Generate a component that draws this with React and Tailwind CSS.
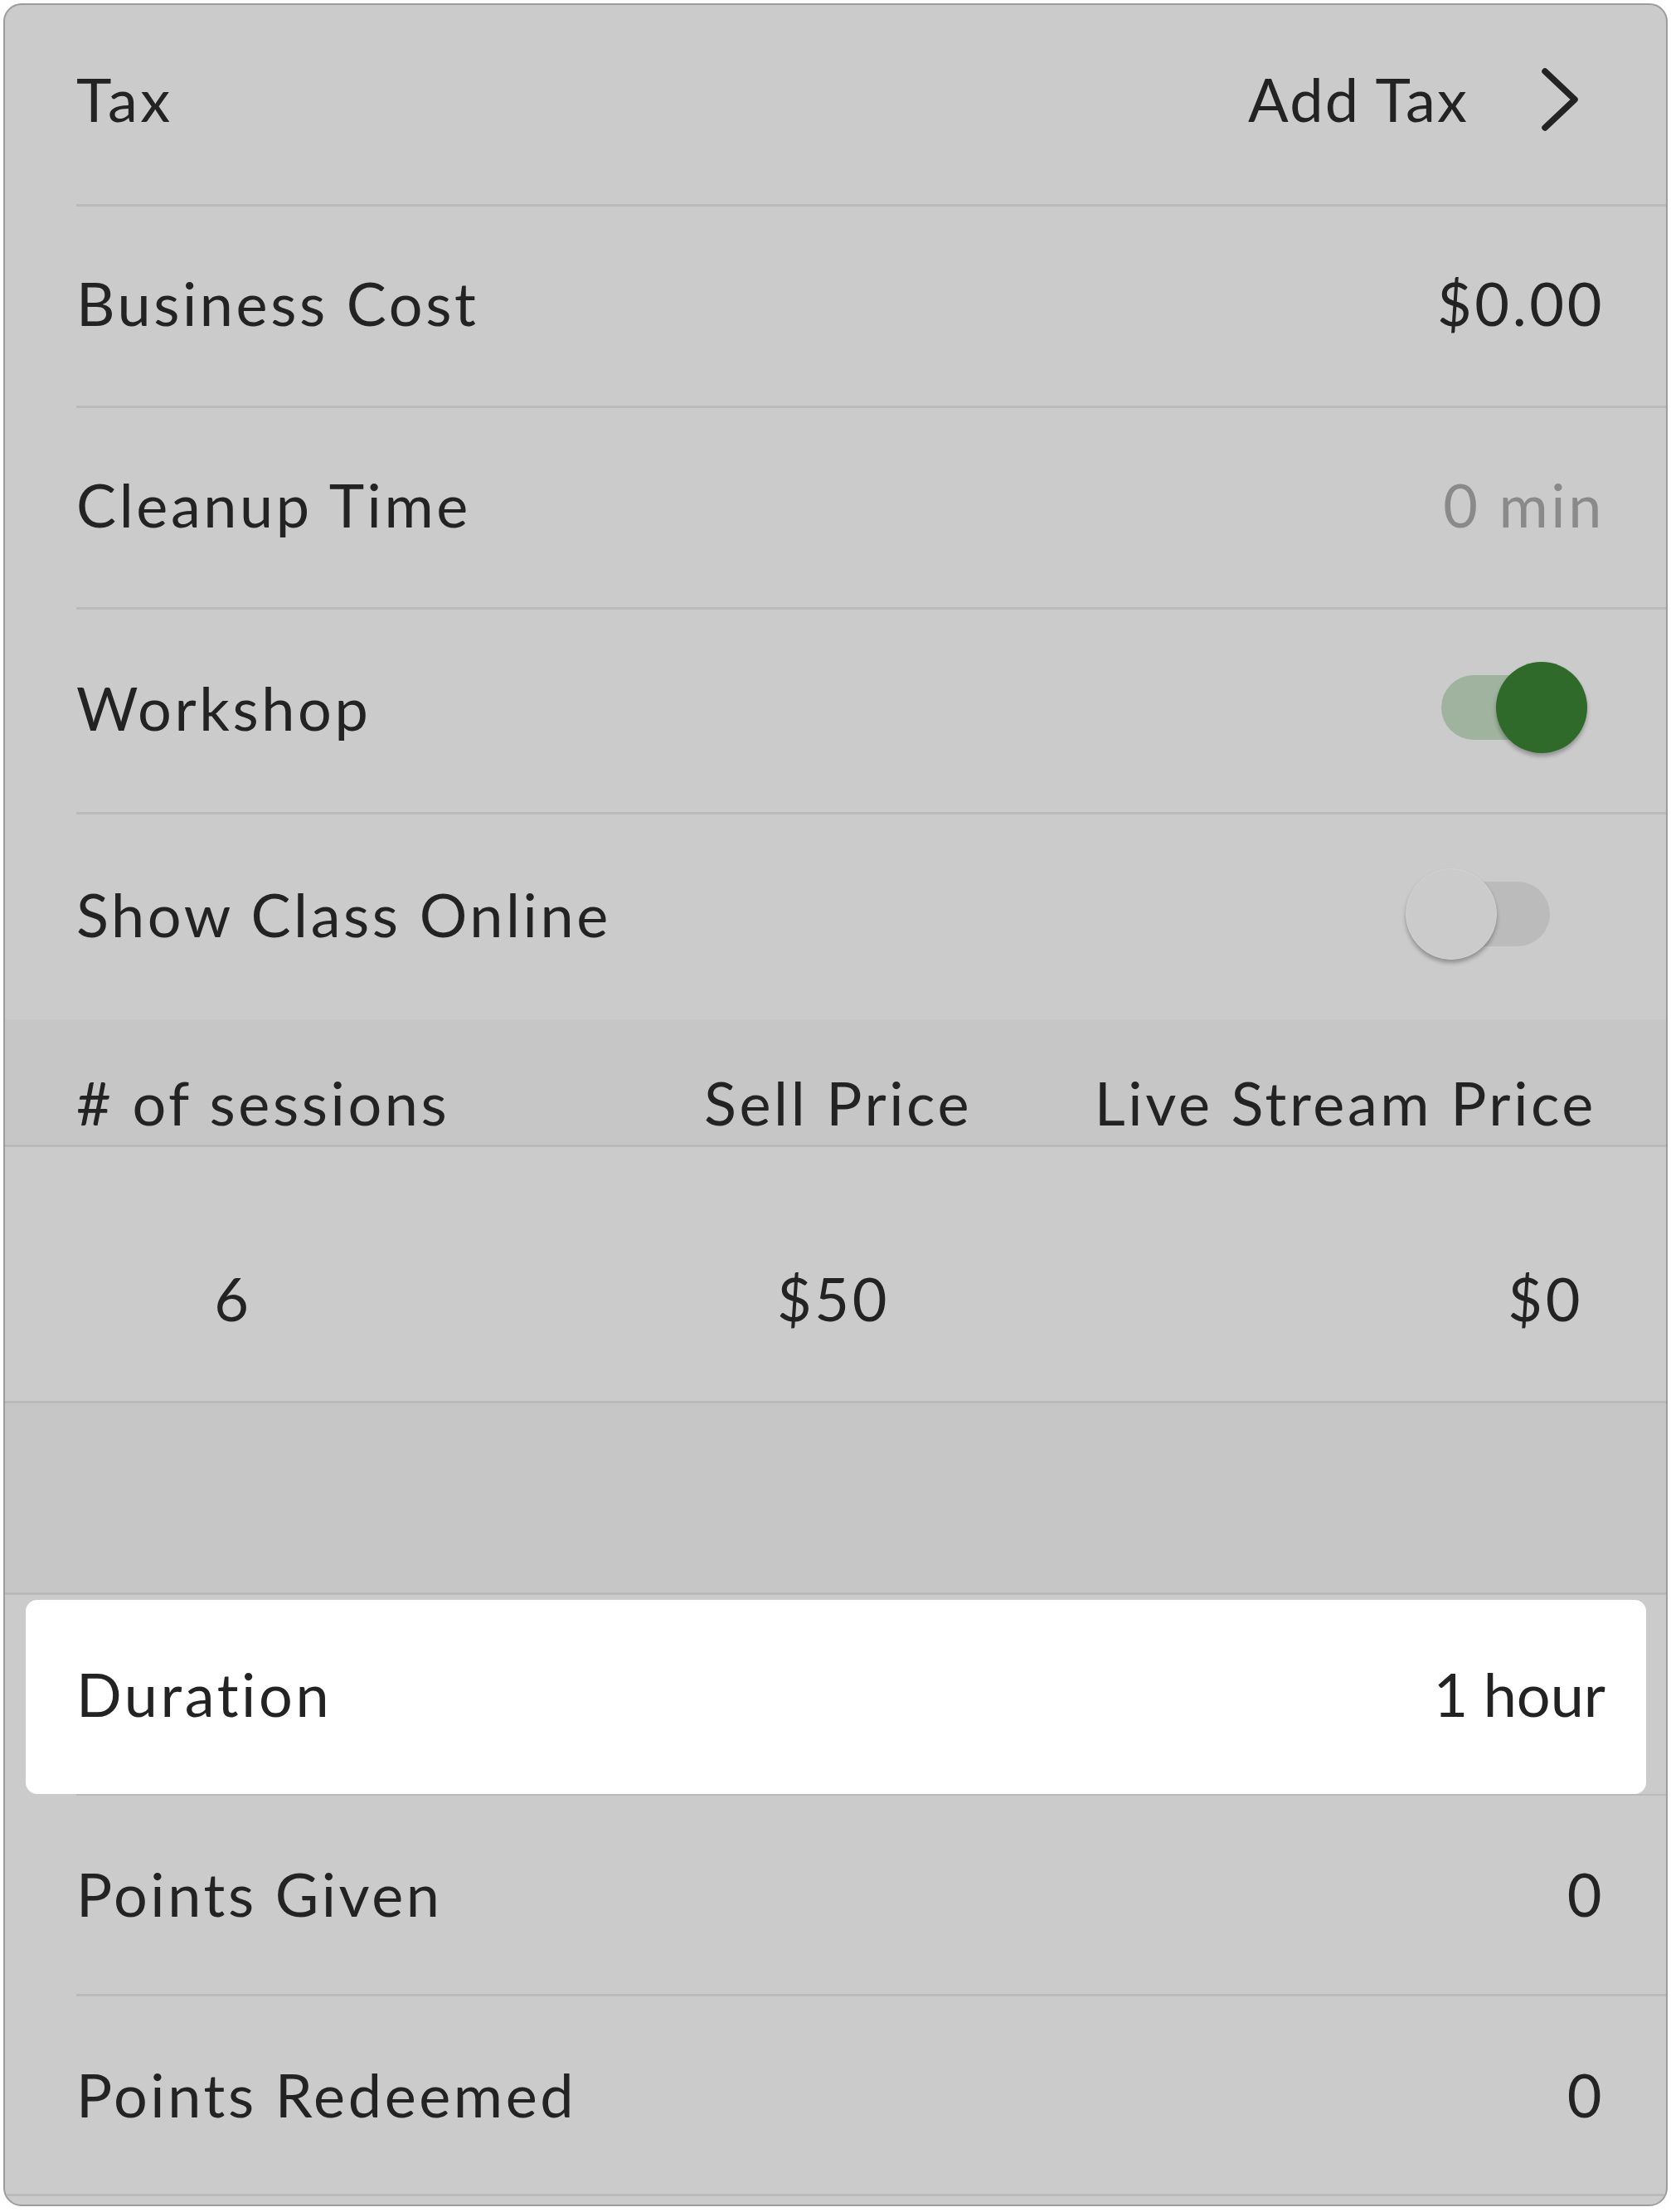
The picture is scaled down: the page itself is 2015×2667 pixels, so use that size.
import React from "react";

const font = "font-['Lato','Liberation_Sans',sans-serif] text-[72px] leading-none tracking-[0.05em] [font-variant-ligatures:none] whitespace-nowrap";

function Row({ h, label, children, sep = true, pb = "pb-[8px]" }) {
  return (
    <div className={`pl-[86px] ${h}`}>
      <div
        className={`h-full flex items-center justify-between pr-[74px] ${pb} ${
          sep ? "border-b-[3px] border-[#bababa]" : ""
        }`}
      >
        <span className="text-[#232323]">{label}</span>
        {children}
      </div>
    </div>
  );
}

function Toggle({ on }) {
  return (
    <div
      className={`relative w-[131px] h-[78px] rounded-full mr-[66px] ${
        on ? "bg-[#9fb39e]" : "bg-[#bbbbbb]"
      }`}
    >
      <div
        className={`absolute top-[-16px] w-[110px] h-[110px] rounded-full shadow-[0_4px_5px_rgba(0,0,0,0.28)] ${
          on ? "left-[66px] bg-[#2f6a2b]" : "left-[-43px] bg-[#cbcbcb] border border-[#d2d2d2]"
        }`}
      />
    </div>
  );
}

export default function App() {
  return (
    <div className={`bg-white w-[2015px] h-[2667px] p-[4px] ${font}`}>
      <div className="w-[2007px] h-[2656px] border-2 border-[#9c9c9c] rounded-[22px] overflow-hidden bg-[#cbcbcb] flex flex-col">
        <Row h="h-[243px]" label="Tax" pb="pb-[14px]">
          <div className="flex items-center">
            <span className="text-[#232323] tracking-[0.03em]">Add Tax</span>
            <svg
              viewBox="0 0 48 80"
              className="w-[48px] h-[80px] ml-[86px] mr-[30px] mt-[2px]"
              fill="none"
              stroke="#232323"
              strokeWidth="7.5"
              strokeLinecap="round"
              strokeLinejoin="round"
            >
              <path d="M6 6 L42 40 L6 74" />
            </svg>
          </div>
        </Row>
        <Row h="h-[243px]" label="Business Cost">
          <span className="text-[#232323]">$0.00</span>
        </Row>
        <Row h="h-[243px]" label="Cleanup Time">
          <span className="text-[#8a8a8a]">0 min</span>
        </Row>
        <Row h="h-[247px]" label="Workshop">
          <Toggle on />
        </Row>
        <Row h="h-[247px]" label="Show Class Online" sep={false}>
          <Toggle on={false} />
        </Row>

        {/* table header */}
        <div className="h-[154px] bg-[#c6c6c6] border-b-[3px] border-[#b9b9b9] flex items-end pb-[15px] pl-[86px] pr-[84px] text-[#232323]">
          <div className="w-[757px]"># of sessions</div>
          <div className="w-[400px]">Sell Price</div>
          <div className="flex-1 text-right">Live Stream Price</div>
        </div>

        {/* table data */}
        <div className="h-[309px] border-b-[3px] border-[#b9b9b9] flex items-start pt-[146px] pl-[86px] text-[#232323]">
          <div className="w-[378px] text-center">6</div>
          <div className="w-[1070px] text-center">$50</div>
          <div className="flex-1 text-right pr-[100px]">$0</div>
        </div>

        {/* empty area */}
        <div className="h-[231px] bg-[#c6c6c6] border-b-[3px] border-[#b9b9b9]" />

        {/* duration highlighted */}
        <div className="h-[242px] flex flex-col">
          <div className="pt-[6px] pl-[25px] pr-[24px]">
            <div className="h-[234px] bg-white rounded-[14px] flex items-center justify-between pl-[61px] pr-[49px] pb-[8px]">
              <span className="text-[#232323]">Duration</span>
              <span className="text-[#232323] tracking-normal">1 hour</span>
            </div>
          </div>
          <div className="ml-[86px] h-[2px] bg-[#bababa]" />
        </div>

        <Row h="h-[242px]" label="Points Given" pb="pb-[4px]">
          <span className="text-[#232323]">0</span>
        </Row>
        <div className="h-[241px] border-b-[3px] border-[#bababa] pl-[86px] pr-[74px] pb-[2px] flex items-center justify-between">
          <span className="text-[#232323]">Points Redeemed</span>
          <span className="text-[#232323]">0</span>
        </div>
      </div>
    </div>
  );
}
